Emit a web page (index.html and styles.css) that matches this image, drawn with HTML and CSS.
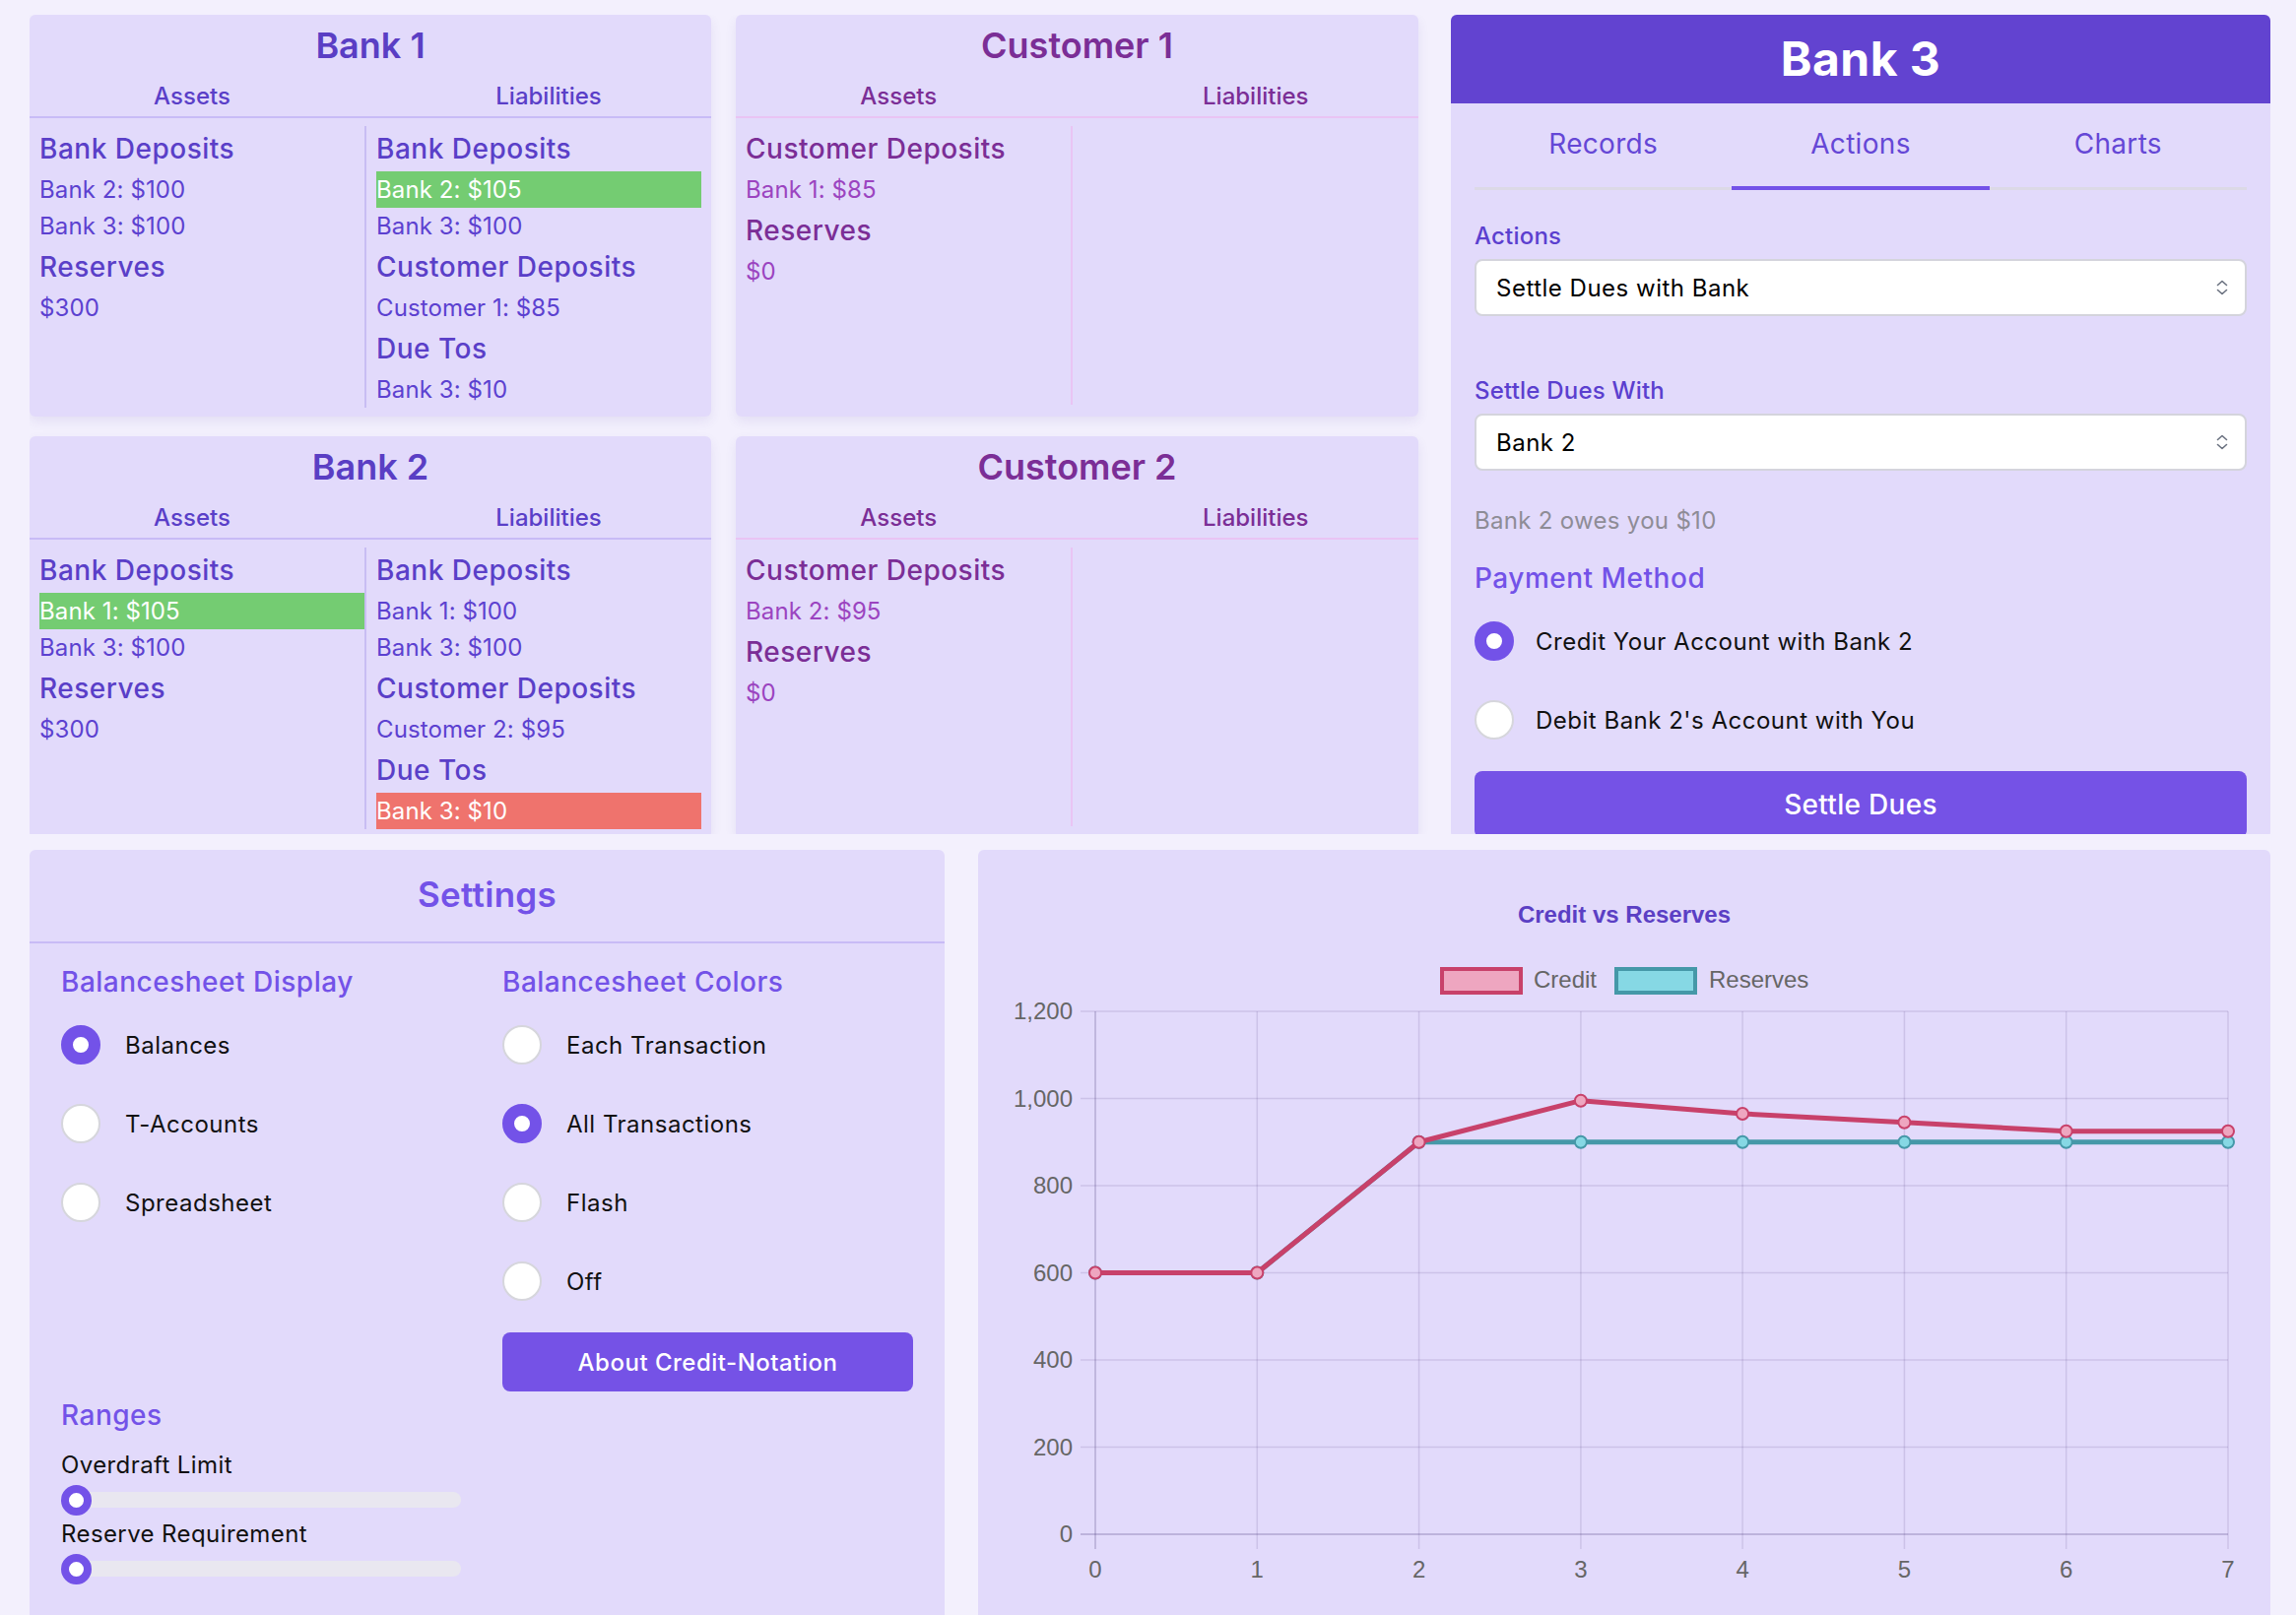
FILE: index.html
```html
<!DOCTYPE html>
<html>
<head>
<meta charset="utf-8">
<title>Credit Notation</title>
<link rel="stylesheet" href="styles.css">
</head>
<body>
<div class="page">
  <section class="top">
    <div class="sheets">
      <article class="sheet bank">
        <h2 class="sheet-title">Bank 1</h2>
        <div class="sheet-head"><span>Assets</span><span>Liabilities</span></div>
        <div class="sheet-body">
          <div class="col">
            <div class="grp">Bank Deposits</div>
            <div class="item">Bank 2: $100</div>
            <div class="item">Bank 3: $100</div>
            <div class="grp">Reserves</div>
            <div class="item">$300</div>
          </div>
          <div class="col">
            <div class="grp">Bank Deposits</div>
            <div class="item hl-green">Bank 2: $105</div>
            <div class="item">Bank 3: $100</div>
            <div class="grp">Customer Deposits</div>
            <div class="item">Customer 1: $85</div>
            <div class="grp">Due Tos</div>
            <div class="item">Bank 3: $10</div>
          </div>
        </div>
      </article>
      <article class="sheet cust">
        <h2 class="sheet-title">Customer 1</h2>
        <div class="sheet-head"><span>Assets</span><span>Liabilities</span></div>
        <div class="sheet-body">
          <div class="col">
            <div class="grp">Customer Deposits</div>
            <div class="item">Bank 1: $85</div>
            <div class="grp">Reserves</div>
            <div class="item">$0</div>
          </div>
          <div class="col"></div>
        </div>
      </article>
      <article class="sheet bank">
        <h2 class="sheet-title">Bank 2</h2>
        <div class="sheet-head"><span>Assets</span><span>Liabilities</span></div>
        <div class="sheet-body">
          <div class="col">
            <div class="grp">Bank Deposits</div>
            <div class="item hl-green">Bank 1: $105</div>
            <div class="item">Bank 3: $100</div>
            <div class="grp">Reserves</div>
            <div class="item">$300</div>
          </div>
          <div class="col">
            <div class="grp">Bank Deposits</div>
            <div class="item">Bank 1: $100</div>
            <div class="item">Bank 3: $100</div>
            <div class="grp">Customer Deposits</div>
            <div class="item">Customer 2: $95</div>
            <div class="grp">Due Tos</div>
            <div class="item hl-red">Bank 3: $10</div>
          </div>
        </div>
      </article>
      <article class="sheet cust">
        <h2 class="sheet-title">Customer 2</h2>
        <div class="sheet-head"><span>Assets</span><span>Liabilities</span></div>
        <div class="sheet-body">
          <div class="col">
            <div class="grp">Customer Deposits</div>
            <div class="item">Bank 2: $95</div>
            <div class="grp">Reserves</div>
            <div class="item">$0</div>
          </div>
          <div class="col"></div>
        </div>
      </article>
    </div>

    <aside class="panel">
      <header class="panel-head">Bank 3</header>
      <nav class="tabs">
        <div class="tab">Records</div>
        <div class="tab active">Actions</div>
        <div class="tab">Charts</div>
      </nav>
      <div class="form">
        <div class="flabel">Actions</div>
        <div class="select"><span>Settle Dues with Bank</span>
          <svg class="chev" width="12" height="20" viewBox="0 0 12 20"><path d="M1.5 7.5 L6 3.5 L10.5 7.5 M1.5 12.5 L6 16.5 L10.5 12.5" fill="none" stroke="#6b7280" stroke-width="1.6" stroke-linecap="round" stroke-linejoin="round"/></svg>
        </div>
        <div class="flabel second">Settle Dues With</div>
        <div class="select"><span>Bank 2</span>
          <svg class="chev" width="12" height="20" viewBox="0 0 12 20"><path d="M1.5 7.5 L6 3.5 L10.5 7.5 M1.5 12.5 L6 16.5 L10.5 12.5" fill="none" stroke="#6b7280" stroke-width="1.6" stroke-linecap="round" stroke-linejoin="round"/></svg>
        </div>
        <p class="owes">Bank 2 owes you $10</p>
        <h3 class="sub pay">Payment Method</h3>
        <div class="radio-row tight"><span class="radio on"></span><span>Credit Your Account with Bank 2</span></div>
        <div class="radio-row tight"><span class="radio"></span><span>Debit Bank 2's Account with You</span></div>
        <button class="btn settle">Settle Dues</button>
      </div>
    </aside>
  </section>

  <section class="bottom">
    <article class="settings">
      <h2 class="settings-title">Settings</h2>
      <div class="settings-body">
        <div class="settings-grid">
          <div class="opt-col">
            <h3 class="sub">Balancesheet Display</h3>
            <div class="radio-rows">
              <div class="radio-row"><span class="radio on"></span><span>Balances</span></div>
              <div class="radio-row"><span class="radio"></span><span>T-Accounts</span></div>
              <div class="radio-row"><span class="radio"></span><span>Spreadsheet</span></div>
            </div>
          </div>
          <div class="opt-col">
            <h3 class="sub">Balancesheet Colors</h3>
            <div class="radio-rows">
              <div class="radio-row"><span class="radio"></span><span>Each Transaction</span></div>
              <div class="radio-row"><span class="radio on"></span><span>All Transactions</span></div>
              <div class="radio-row"><span class="radio"></span><span>Flash</span></div>
              <div class="radio-row"><span class="radio"></span><span>Off</span></div>
            </div>
            <button class="btn about">About Credit-Notation</button>
          </div>
        </div>
        <h3 class="sub ranges">Ranges</h3>
        <div class="range-label first">Overdraft Limit</div>
        <div class="range"><span class="track"></span><span class="thumb"></span></div>
        <div class="range-label">Reserve Requirement</div>
        <div class="range"><span class="track"></span><span class="thumb"></span></div>
      </div>
    </article>

    <article class="chart-card">
      <svg class="chart" width="1312" height="777" viewBox="0 0 1312 777">
        <text class="c-title" x="656" y="74" text-anchor="middle">Credit vs Reserves</text>
        <rect x="471" y="121" width="80" height="24" fill="#eea6c0" stroke="#c8416a" stroke-width="4"/>
        <text class="c-legend" x="564" y="140">Credit</text>
        <rect x="648" y="121" width="80" height="24" fill="#86d8e4" stroke="#4598a8" stroke-width="4"/>
        <text class="c-legend" x="742" y="140">Reserves</text>

        <g stroke="rgba(60,40,110,0.13)" stroke-width="1.5">
          <line x1="104" y1="164" x2="1269" y2="164"/>
          <line x1="104" y1="252.5" x2="1269" y2="252.5"/>
          <line x1="104" y1="341" x2="1269" y2="341"/>
          <line x1="104" y1="429.5" x2="1269" y2="429.5"/>
          <line x1="104" y1="518" x2="1269" y2="518"/>
          <line x1="104" y1="606.5" x2="1269" y2="606.5"/>
          <line x1="283.3" y1="164" x2="283.3" y2="710"/>
          <line x1="447.6" y1="164" x2="447.6" y2="710"/>
          <line x1="611.9" y1="164" x2="611.9" y2="710"/>
          <line x1="776.1" y1="164" x2="776.1" y2="710"/>
          <line x1="940.4" y1="164" x2="940.4" y2="710"/>
          <line x1="1104.7" y1="164" x2="1104.7" y2="710"/>
          <line x1="1269" y1="164" x2="1269" y2="710"/>
        </g>
        <g stroke="rgba(60,40,110,0.22)" stroke-width="1.8">
          <line x1="104" y1="695" x2="1269" y2="695"/>
          <line x1="119" y1="164" x2="119" y2="710"/>
        </g>

        <g class="c-tick" text-anchor="end">
          <text x="96" y="172">1,200</text>
          <text x="96" y="260.5">1,000</text>
          <text x="96" y="349">800</text>
          <text x="96" y="437.5">600</text>
          <text x="96" y="526">400</text>
          <text x="96" y="614.5">200</text>
          <text x="96" y="703">0</text>
        </g>
        <g class="c-tick" text-anchor="middle">
          <text x="119" y="739">0</text>
          <text x="283.3" y="739">1</text>
          <text x="447.6" y="739">2</text>
          <text x="611.9" y="739">3</text>
          <text x="776.1" y="739">4</text>
          <text x="940.4" y="739">5</text>
          <text x="1104.7" y="739">6</text>
          <text x="1269" y="739">7</text>
        </g>

        <path d="M119 429.5 L283.3 429.5 L447.6 296.75 L611.9 296.75 L776.1 296.75 L940.4 296.75 L1104.7 296.75 L1269 296.75" fill="none" stroke="#4598a8" stroke-width="5" stroke-linejoin="round"/>
        <g fill="#86d8e4" stroke="#4598a8" stroke-width="2">
          <circle cx="119" cy="429.5" r="6"/>
          <circle cx="283.3" cy="429.5" r="6"/>
          <circle cx="447.6" cy="296.75" r="6"/>
          <circle cx="611.9" cy="296.75" r="6"/>
          <circle cx="776.1" cy="296.75" r="6"/>
          <circle cx="940.4" cy="296.75" r="6"/>
          <circle cx="1104.7" cy="296.75" r="6"/>
          <circle cx="1269" cy="296.75" r="6"/>
        </g>
        <path d="M119 429.5 L283.3 429.5 L447.6 296.75 L611.9 254.7 L776.1 268 L940.4 276.8 L1104.7 285.7 L1269 285.7" fill="none" stroke="#c8416a" stroke-width="5" stroke-linejoin="round"/>
        <g fill="#eea6c0" stroke="#c8416a" stroke-width="2">
          <circle cx="119" cy="429.5" r="6"/>
          <circle cx="283.3" cy="429.5" r="6"/>
          <circle cx="447.6" cy="296.75" r="6"/>
          <circle cx="611.9" cy="254.7" r="6"/>
          <circle cx="776.1" cy="268" r="6"/>
          <circle cx="940.4" cy="276.8" r="6"/>
          <circle cx="1104.7" cy="285.7" r="6"/>
          <circle cx="1269" cy="285.7" r="6"/>
        </g>
      </svg>
    </article>
  </section>
</div>
</body>
</html>
```

FILE: styles.css
```css
* {
  box-sizing: border-box;
  margin: 0;
  padding: 0;
}

html,
body {
  height: 1640px;
  overflow: hidden;
}

body {
  background: #f3f0fd;
  font-family: Inter, "Noto Sans", sans-serif;
  color: #111;
}

.page {
  padding: 15px 26px 0 30px;
}

/* ---------- top area ---------- */
.top {
  display: flex;
  align-items: flex-start;
  height: 832px;
  overflow: hidden;
}

.sheets {
  display: grid;
  grid-template-columns: 692px 693px;
  grid-template-rows: 408px 408px;
  column-gap: 25px;
  row-gap: 20px;
  flex: none;
}

.sheet {
  background: #e2dafb;
  border-radius: 6px;
  box-shadow: 0 5px 12px rgba(80, 60, 160, 0.09);
  display: flex;
  flex-direction: column;
  overflow: hidden;
}

.sheet-title {
  font-size: 36px;
  font-weight: 600;
  line-height: 43px;
  text-align: center;
  padding-top: 10px;
}

.sheet-head {
  display: grid;
  grid-template-columns: 1fr 1fr;
  column-gap: 32px;
  margin-top: 12px;
  padding-bottom: 2px;
  border-bottom: 2px solid #c8bbf6;
  font-size: 24px;
  font-weight: 500;
  line-height: 36px;
  text-align: center;
}

.sheet-body {
  flex: 1;
  display: grid;
  grid-template-columns: 330px 1fr;
  padding: 8px 10px 12px;
  min-height: 0;
}

.col + .col {
  border-left: 2px solid #c8bdf3;
  padding-left: 10px;
}

.grp {
  font-size: 28px;
  font-weight: 500;
  line-height: 46px;
  letter-spacing: 0.5px;
  white-space: nowrap;
}

.item {
  font-size: 24px;
  line-height: 37px;
  letter-spacing: 0.1px;
  white-space: nowrap;
}

.bank .sheet-title {
  color: #5a3ec4;
}

.bank .sheet-head,
.bank .grp {
  color: #5a3fc8;
}

.bank .item {
  color: #5c41d0;
}

.cust .sheet-title,
.cust .sheet-head,
.cust .grp {
  color: #7b2e96;
}

.cust .item {
  color: #9b44c0;
}

.cust .sheet-head {
  border-bottom-color: #e9c4f4;
}

.cust .col + .col {
  border-left-color: #e9c4f4;
}

.bank .item.hl-green {
  background: #74cc72;
  color: #fff;
}

.bank .item.hl-red {
  background: #ef736d;
  color: #fff;
}

/* ---------- bank 3 panel ---------- */
.panel {
  width: 832px;
  margin-left: 33px;
  flex: none;
  background: #e2dafb;
  border-radius: 6px;
  overflow: hidden;
}

.panel-head {
  background: #6243d0;
  color: #fff;
  font-size: 48px;
  font-weight: 700;
  line-height: 90px;
  letter-spacing: 0.5px;
  text-align: center;
}

.tabs {
  display: grid;
  grid-template-columns: repeat(3, 1fr);
  padding: 0 24px;
}

.tab {
  text-align: center;
  font-size: 28px;
  line-height: 40px;
  letter-spacing: 0.3px;
  padding: 21px 0 24px;
  border-bottom: 3px solid #dcd9e6;
  color: #6547d6;
}

.tab.active {
  border-bottom: 4px solid #7352e8;
  padding-bottom: 23px;
}

.form {
  padding: 0 24px;
}

.flabel {
  font-size: 24px;
  font-weight: 500;
  line-height: 36px;
  letter-spacing: 0.2px;
  color: #5b3fcf;
  margin-top: 29px;
}

.flabel.second {
  margin-top: 58px;
}

.select {
  margin-top: 5px;
  height: 58px;
  background: #fff;
  border: 2px solid #d4d4dc;
  border-radius: 8px;
  display: flex;
  align-items: center;
  justify-content: space-between;
  padding: 0 17px 0 20px;
  font-size: 24px;
  letter-spacing: 0.5px;
  color: #000;
}

.chev {
  display: block;
  flex: none;
}

.owes {
  margin-top: 33px;
  font-size: 24px;
  line-height: 36px;
  letter-spacing: 0.3px;
  color: #8e8c96;
}

.sub {
  font-size: 28px;
  font-weight: 500;
  line-height: 42px;
  letter-spacing: 0.5px;
  color: #7352e8;
}

.sub.pay {
  margin-top: 19px;
}

.radio-row {
  display: flex;
  align-items: center;
  height: 80px;
  gap: 25px;
  font-size: 24px;
  letter-spacing: 0.5px;
  color: #111;
}

.radio-row.tight {
  gap: 22px;
}

.sub.pay + .radio-row,
.radio-rows {
  margin-top: 3px;
}

.radio {
  width: 40px;
  height: 40px;
  border-radius: 50%;
  background: #fff;
  border: 2px solid #d6d6dc;
  flex: none;
}

.radio.on {
  border: 12px solid #7352e8;
}

.btn {
  display: block;
  border: 0;
  background: #7552e6;
  color: #fff;
  font-family: inherit;
  font-weight: 500;
  border-radius: 8px;
  text-align: center;
}

.btn.settle {
  width: 100%;
  margin-top: 12px;
  height: 68px;
  font-size: 28px;
  letter-spacing: 0.3px;
}

/* ---------- bottom area ---------- */
.bottom {
  display: flex;
  gap: 34px;
  margin-top: 16px;
  height: 777px;
}

.settings {
  width: 929px;
  flex: none;
  background: #e2dafb;
  border-radius: 6px 6px 0 0;
}

.settings-title {
  font-size: 35px;
  font-weight: 600;
  line-height: 41px;
  letter-spacing: 0.3px;
  text-align: center;
  color: #7352e8;
  padding: 25px 0 27px;
  border-bottom: 2px solid #c8bbf6;
}

.settings-body {
  padding: 0 32px;
}

.settings-grid {
  display: grid;
  grid-template-columns: 1fr 1fr;
  column-gap: 32px;
  padding-top: 18px;
}

.btn.about {
  margin-top: 12px;
  width: 417px;
  height: 60px;
  font-size: 24px;
  letter-spacing: 0.5px;
}

.sub.ranges {
  margin-top: 3px;
}

.range-label {
  font-size: 24px;
  line-height: 36px;
  letter-spacing: 0.4px;
  color: #111;
}

.range-label.first {
  margin-top: 12px;
}

.range {
  position: relative;
  display: flex;
  align-items: center;
  height: 32px;
  margin: 1px 0;
}

.track {
  width: 406px;
  height: 16px;
  border-radius: 8px;
  background: #e9e7f0;
}

.thumb {
  position: absolute;
  left: 0;
  top: 0.5px;
  width: 31px;
  height: 31px;
  border-radius: 50%;
  background: #fff;
  border: 8px solid #7352e8;
}

.chart-card {
  width: 1312px;
  flex: none;
  background: #e2dafb;
  border-radius: 6px 6px 0 0;
}

.chart {
  display: block;
  font-family: "Liberation Sans", Arial, sans-serif;
}

.c-title {
  font-size: 24px;
  font-weight: 700;
  fill: #5b3fc4;
}

.c-legend,
.c-tick {
  font-size: 24px;
  fill: #666;
}
```
